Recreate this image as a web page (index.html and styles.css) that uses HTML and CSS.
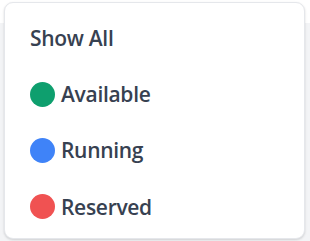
FILE: index.html
```html
<!DOCTYPE html>
<html lang="en">
<head>
    <meta charset="UTF-8">
    <meta name="viewport" content="width=device-width, initial-scale=1.0">
    <title>Status Filter</title>
    <link rel="stylesheet" href="styles.css">
</head>
<body>
    <div class="page-strip"></div>
    <div class="dropdown">
        <ul class="menu">
            <li class="menu-item">Show All</li>
            <li class="menu-item"><span class="dot dot-green"></span>Available</li>
            <li class="menu-item"><span class="dot dot-blue"></span>Running</li>
            <li class="menu-item"><span class="dot dot-red"></span>Reserved</li>
        </ul>
    </div>
</body>
</html>
```

FILE: styles.css
```css
* {
    margin: 0;
    padding: 0;
    box-sizing: border-box;
}

body {
    font-family: 'Open Sans', 'Noto Sans', sans-serif;
    background: #f3f4f6;
    color: #374151;
    height: 100vh;
    overflow: hidden;
}

.page-strip {
    height: 23px;
    background: #fff;
}

.dropdown {
    position: absolute;
    top: 2px;
    left: 4px;
    width: 301px;
    height: 237px;
    background: #fff;
    border: 1px solid #e5e7eb;
    border-radius: 9px;
    box-shadow: 0 1px 3px rgba(0, 0, 0, 0.1), 0 1px 2px rgba(0, 0, 0, 0.06);
}

.menu {
    list-style: none;
    padding: 6.5px 25px;
}

.menu-item {
    display: flex;
    align-items: center;
    gap: 6px;
    height: 56.4px;
    font-size: 21px;
    font-weight: 600;
    letter-spacing: -0.3px;
}

.dot {
    width: 25px;
    height: 25px;
    border-radius: 50%;
}

.dot-green {
    background: #0e9f6e;
}

.dot-blue {
    background: #3f83f8;
}

.dot-red {
    background: #f05252;
}
```
